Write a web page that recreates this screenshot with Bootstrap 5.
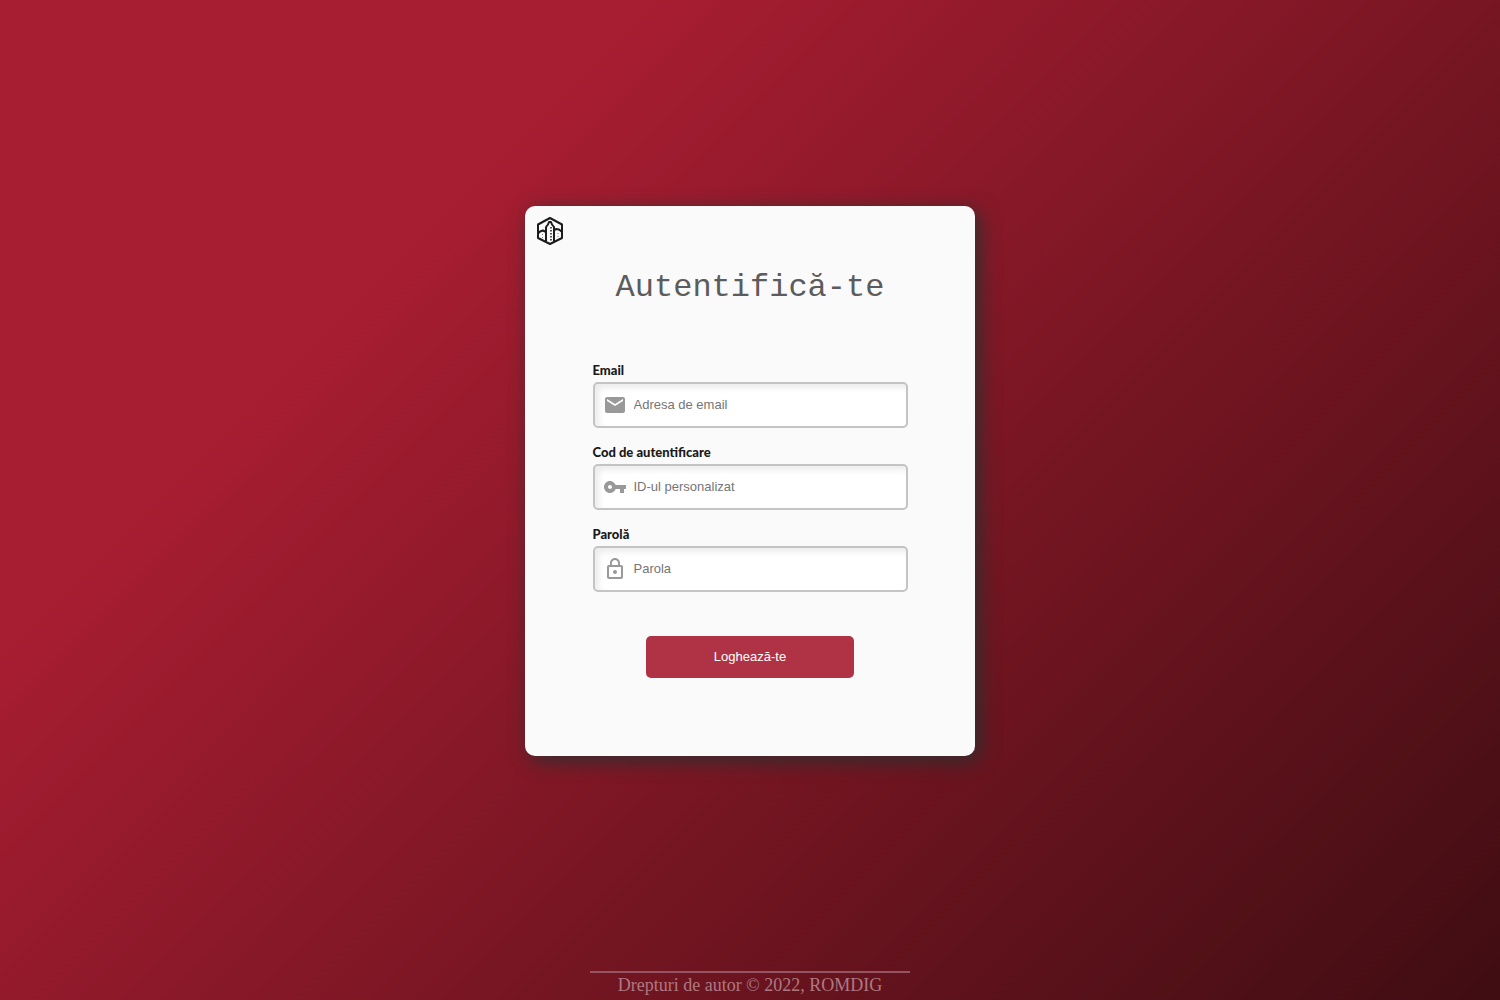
<!DOCTYPE html>
<html lang="ro">
<head>
<meta charset="utf-8">
<meta name="viewport" content="width=device-width, initial-scale=1">
<title>Autentifică-te</title>
<link href="https://cdn.jsdelivr.net/npm/bootstrap@5.3.0/dist/css/bootstrap.min.css" rel="stylesheet">
<style>
body { background: linear-gradient(315deg, #3f0d12 0%, #a71d31 74%) no-repeat; font-family: "Liberation Sans", Arial, sans-serif; }
.login-card { max-width: 450px; min-height: 550px; background: #fafafa; border-radius: 10px; box-shadow: 5px 5px 20px #2f2f2f; padding: 10px 0 78px; }
.brand-logo { margin-left: 10px; width: 30px; height: 30px; }
.login-title { font-family: "Liberation Mono", "Courier New", monospace; font-size: 32px; line-height: 40px; color: #5c5c5c; margin: 22px 0 54px; }
.login-form { width: 70%; }
.field-label { font-family: Lato, sans-serif; font-weight: 900; font-size: 13px; line-height: 16px; color: #1a1a1a; margin-bottom: 4px; }
.field-box { height: 46px; background: #fff; border: 2px solid #c4c4c4; border-radius: 5px; box-shadow: inset 4px 4px 6px #ececec; padding-left: 8px; gap: 7px; }
.field-box:focus-within { border-color: #a71d31; }
.field-box svg { width: 24px; height: 24px; fill: #999; flex: none; }
.field-box .form-control { font-size: 13px; line-height: 20px; color: #333; }
.field-box .form-control:focus { box-shadow: none; }
.field-box .form-control::placeholder { color: #757575; }
.login-btn { width: 208px; height: 42px; margin-top: 44px; font-size: 13px; color: #fff; background: #af3345; border-radius: 5px; }
.login-btn:hover { background: #a71d31; color: #fff; }
.page-footer { width: 320px; border-top: 2px solid #945561; margin-top: 9px; padding-bottom: 3px; font-family: "Liberation Serif", serif; font-size: 18px; line-height: 24px; color: #ae7983; }
</style>
<script src="https://cdn.jsdelivr.net/npm/bootstrap@5.3.0/dist/js/bootstrap.bundle.min.js" defer></script>
</head>
<body class="d-flex flex-column min-vh-100">
<main class="flex-grow-1 d-flex align-items-center justify-content-center">
  <section class="login-card w-100">
    <svg class="brand-logo d-block" viewBox="0 0 30 30" fill="none" stroke="#1c1c1c" stroke-width="2" stroke-linejoin="round" role="img" aria-label="ROMDIG">
      <path d="M15 2 27 8.500V22L15 28 3 22V8.500Z"/>
      <path d="M11 26V11L13 8.500 14 6h2l1 2.500 2 2.500V26"/>
      <path d="M3.500 17 5 15.500l3-1 3 1.500M19 14.500l2-1.500 3 .5 2.500 2"/>
      <path d="M16 11v15" stroke-width="1.500" stroke-dasharray="1.500 1.500"/>
      <path d="M7.500 18v5M23 17v6" stroke-width="1" stroke-dasharray="1 2" stroke="#777"/>
    </svg>
    <h1 class="login-title text-center">Autentifică-te</h1>
    <form class="login-form mx-auto">
      <div class="mb-3">
        <label class="field-label d-block" for="email">Email</label>
        <div class="field-box d-flex align-items-center">
          <svg viewBox="0 0 24 24" aria-hidden="true"><path d="M20 4H4c-1.100 0-1.990.9-1.990 2L2 18c0 1.100.9 2 2 2h16c1.100 0 2-.9 2-2V6c0-1.100-.9-2-2-2zm0 4-8 5-8-5V6l8 5 8-5v2z"/></svg>
          <input class="form-control border-0 bg-transparent p-0" id="email" type="email" placeholder="Adresa de email">
        </div>
      </div>
      <div class="mb-3">
        <label class="field-label d-block" for="code">Cod de autentificare</label>
        <div class="field-box d-flex align-items-center">
          <svg viewBox="0 0 24 24" aria-hidden="true"><path d="M12.650 10C11.830 7.670 9.610 6 7 6c-3.310 0-6 2.690-6 6s2.690 6 6 6c2.610 0 4.830-1.670 5.650-4H17v4h4v-4h2v-4H12.650zM7 14c-1.100 0-2-.9-2-2s.9-2 2-2 2 .9 2 2-.9 2-2 2z"/></svg>
          <input class="form-control border-0 bg-transparent p-0" id="code" type="text" placeholder="ID-ul personalizat">
        </div>
      </div>
      <div>
        <label class="field-label d-block" for="password">Parolă</label>
        <div class="field-box d-flex align-items-center">
          <svg viewBox="0 0 24 24" aria-hidden="true"><path d="M12 17c1.100 0 2-.9 2-2s-.9-2-2-2-2 .9-2 2 .9 2 2 2zm6-9h-1V6c0-2.760-2.240-5-5-5S7 3.240 7 6v2H6c-1.100 0-2 .9-2 2v10c0 1.100.9 2 2 2h12c1.100 0 2-.9 2-2V10c0-1.100-.9-2-2-2zM8.900 6c0-1.710 1.390-3.100 3.100-3.100s3.100 1.390 3.100 3.100v2H8.900V6zM18 20H6V10h12v10z"/></svg>
          <input class="form-control border-0 bg-transparent p-0" id="password" type="password" placeholder="Parola">
        </div>
      </div>
      <button class="btn login-btn d-block mx-auto border-0 p-0" type="submit">Loghează-te</button>
    </form>
  </section>
</main>
<footer class="page-footer mx-auto text-center">Drepturi de autor © 2022, ROMDIG</footer>
</body>
</html>
